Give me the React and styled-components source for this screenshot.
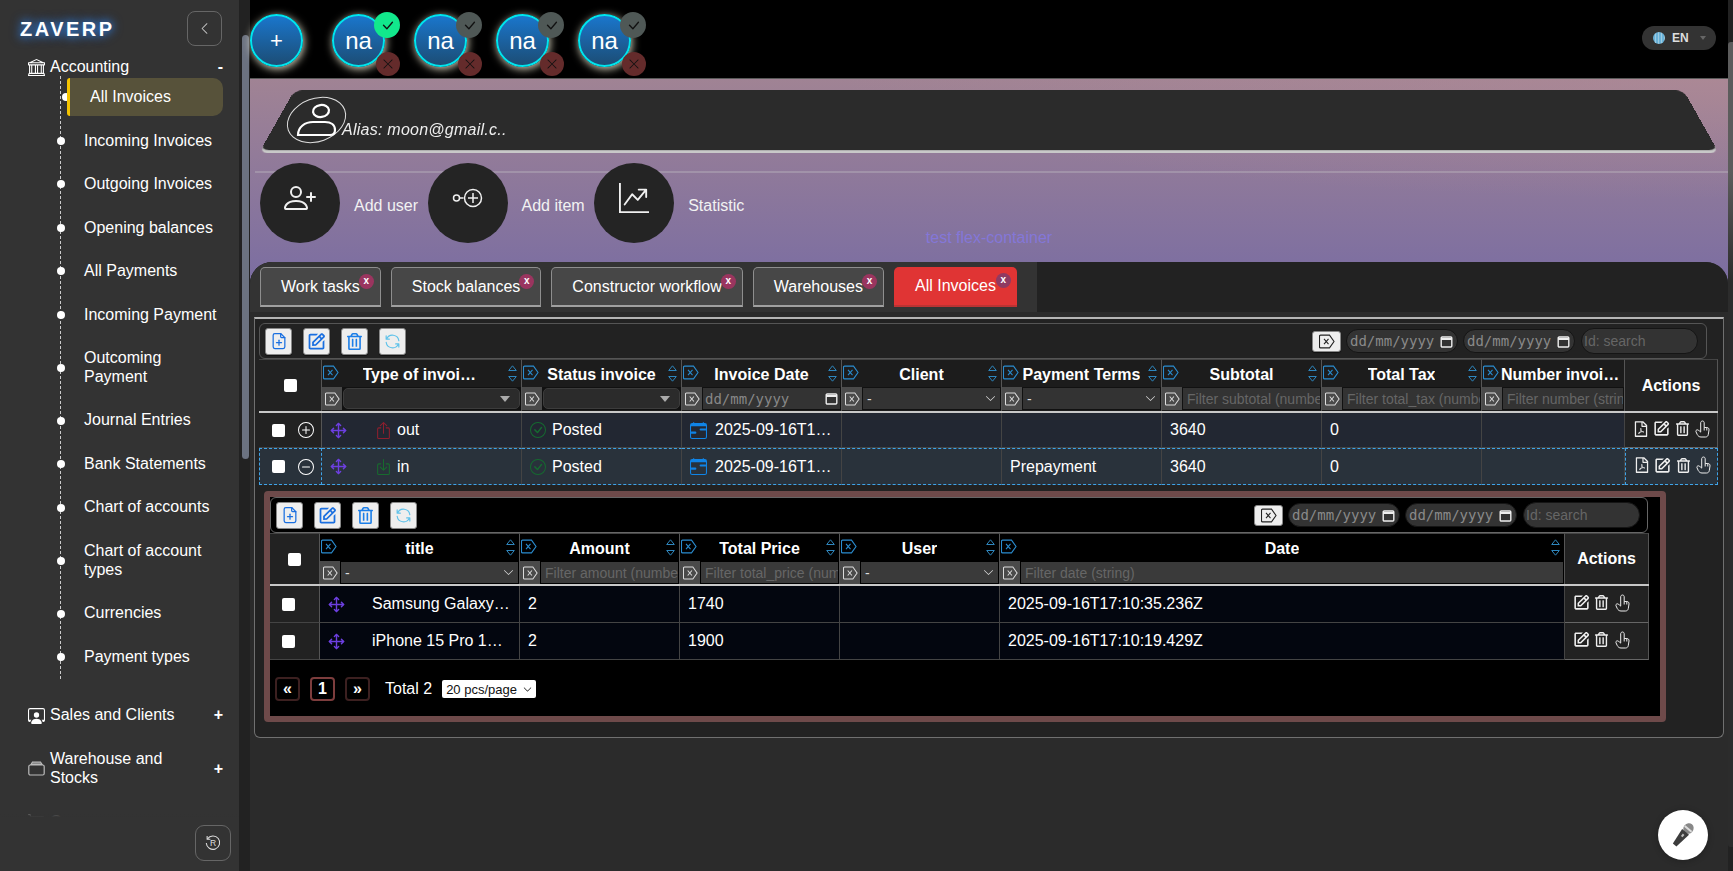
import React from "react";
import styled, { createGlobalStyle } from "styled-components";
import { BsBank, BsPersonWorkspace, BsBoxArrowUp, BsBoxArrowInDown, BsCheckCircle, BsCalendarRange, BsPlusCircle, BsDashCircle, BsCheckLg, BsXLg, BsChevronLeft, BsChevronDown, BsPersonPlus, BsGraphUpArrow, BsCart } from "react-icons/bs";
import { AiOutlineFilePdf } from "react-icons/ai";
import { BiEdit } from "react-icons/bi";
import { FaRegTrashAlt } from "react-icons/fa";
import { TbFilePlus, TbRefresh } from "react-icons/tb";
import { LuMove } from "react-icons/lu";

const Global = createGlobalStyle`
  html, body { margin: 0; height: 100%; overflow: hidden; background: #222; }
  body { font-family: "Liberation Sans", Arial, sans-serif; color: #fff; font-size: 16px; }
  * { box-sizing: border-box; }
`;

const Shell = styled.div`display: flex; height: 871px; width: 1733px; position: relative;`;

/* sidebar */
const Sidebar = styled.aside`width: 239px; flex: none; background: #333; display: flex; flex-direction: column; height: 100%;`;
const Nav = styled.nav`flex: 1; overflow: hidden; position: relative; min-height: 0;
  &::after { content: ""; position: absolute; left: 0; right: 0; bottom: 0; height: 14px; background: linear-gradient(transparent, #333); }
`;
const LogoRow = styled.div`height: 55px; display: flex; align-items: flex-start; justify-content: space-between; padding: 11px 17px 0 20px;`;
const Logo = styled.div`font-weight: 700; font-size: 20px; letter-spacing: 2.5px; line-height: 36px; text-shadow: 0 0 8px #2f7fe0, 0 0 12px #2f6fc0;`;
const Collapse = styled.button`width: 35px; height: 35px; border: 1px solid #666; border-radius: 8px; background: transparent; color: #ccc; display: flex; align-items: center; justify-content: center; padding: 0; font-size: 13px;`;
const GroupHead = styled.div`display: grid; grid-template-columns: 22px 1fr 16px; align-items: center; padding: ${p => p.$tight ? "3px" : "12.5px"} 16px ${p => p.$tight ? "0" : "12.5px"} 28px; line-height: 18.7px; font-size: 16px;
  & > svg { width: 17px; height: 17px; }
`;
const Sign = styled.span`font-weight: 700; text-align: right; font-size: 16px;`;
const SubList = styled.ul`list-style: none; margin: -1px 0 15px 60px; padding: 0; border-left: 1px dashed #ccc;`;
const SubItem = styled.li`position: relative; padding: 0; height: ${p => p.$two ? "62.4px" : "43.5px"}; display: flex; align-items: center; 
  &::before { content: ""; position: absolute; left: ${p => p.$active ? "1px" : "-4.5px"}; top: 50%; margin-top: -4px; width: 8px; height: 8px; border-radius: 50%; background: #fff; }
`;
const SubLink = styled.span`display: block; line-height: 18.7px; position: relative; margin-left: ${p => p.$active ? "6px" : "23px"}; width: ${p => p.$active ? "156px" : "136px"}; 
  ${p => p.$active && `height: 38px; padding: 9.5px 0 0 20px; background: #57523a; border-left: 3px solid #f5c400; border-radius: 3px 10px 10px 3px;`}
`;
const Footer = styled.div`height: 54px; flex: none; display: flex; justify-content: flex-end; align-items: center; padding: 0 8px 2px 0; background: #333; box-shadow: 0 -1px 2px rgba(0,0,0,.12);`;
const FootBtn = styled.button`width: 36px; height: 36px; border: 1px solid #666; border-radius: 9px; background: transparent; color: #ddd; padding: 0; display: flex; align-items: center; justify-content: center;`;

const Gutter = styled.div`width: 11px; flex: none; background: #222; padding: 35px 1px 0 3px;`;
const GutterThumb = styled.div`height: 424px; background: #6b7280; border-radius: 4px;`;

/* main */
const Main = styled.main`flex: 1; min-width: 0; display: flex; flex-direction: column; height: 100%;`;
const TopBar = styled.header`height: 79px; flex: none; background: #000; border-bottom: 1px solid #5a5a5a; display: flex; align-items: flex-start; padding: 14px 12px 0 0;`;
const Bubbles = styled.div`display: flex; gap: 29px;`;
const Bubble = styled.div`position: relative; width: 53px; height: 53px; border-radius: 50%; border: 2px solid #00e5ee; background: linear-gradient(#1a76cc, #1c4d75); box-shadow: 1px 2px 8px rgba(255,250,225,.85); display: flex; align-items: center; justify-content: center; font-size: ${p => p.$small ? "22px" : "24px"};`;
const Badge = styled.span`position: absolute; width: ${p => p.$top ? "26px" : "24px"}; height: ${p => p.$top ? "26px" : "24px"}; border-radius: 50%; background: ${p => p.$bg}; color: ${p => p.$fg || "#111"}; display: flex; align-items: center; justify-content: center; font-size: 13px; left: ${p => p.$top ? "40px" : "42px"}; top: ${p => p.$top ? "-4px" : "36px"};`;
const Lang = styled.div`margin: 12px 0 0 auto; width: 74px; height: 24px; border-radius: 12px; background: #333; display: flex; align-items: center; gap: 7px; padding-left: 11px; font-size: 12px; font-weight: 700; color: #ddd;`;
const Globe = styled.span`width: 12px; height: 12px; border-radius: 50%; background: repeating-linear-gradient(90deg, #6ab2d8 0 2px, #9ccbe2 2px 3px);`;
const Caret = styled.span`margin-left: 4px; width: 0; height: 0; border: 3.5px solid transparent; border-top: 4px solid #666; border-bottom: 0;`;

const Stage = styled.div`flex: 1; min-height: 0; background: radial-gradient(60% 120px at 100% 0, rgba(180,140,150,.55), transparent), linear-gradient(#a08394, #7a6da2) 0 0 / 100% 209px no-repeat, #2b2b2b; background-repeat: no-repeat; background-size: 100% 209px, 100% 209px; background-color: #2b2b2b; display: flex; flex-direction: column;`;
const Hero = styled.section`height: 183px; flex: none; padding-top: 12px;`;
const ProfileCard = styled.div`position: relative; height: 62px; margin: 0 9px; display: flex; align-items: flex-start; padding: 6px 0 0 27px;
  &::before { content: ""; position: absolute; left: 0; right: 0; bottom: 0; height: 67px; background: #2b2b2b; border-bottom: 3px solid #c8c8c8; border-radius: 8px; transform-origin: 50% 100%; transform: perspective(470px) rotateX(20deg); }
`;
const AvatarRing = styled.div`position: relative; width: 61px; height: 44px; margin-top: 1px; display: flex; align-items: center; justify-content: center;
  &::before { content: ""; position: absolute; inset: 0; border: 1px solid #ddd; border-radius: 50%; transform: rotate(-20deg); }
`;
const AliasText = styled.span`position: relative; margin: 24px 0 0 -5px; font-style: italic; font-size: 16px; letter-spacing: .25px; color: #eee;`;
const ActionRow = styled.div`margin: 18px 0 0 5px; border-top: 2px solid rgba(205,205,205,.3); display: flex; align-items: flex-start; padding-left: 5px; height: 72px;`;
const ActionGroup = styled.div`display: flex; align-items: center; margin-top: -10px;`;
const ActionCircle = styled.div`width: 80px; height: 80px; border-radius: 50%; background: #242424; display: flex; align-items: center; justify-content: center; color: #f0f0f0; padding-bottom: 10px;`;
const ActionLabel = styled.span`margin: 6px 9.5px 0 14px; color: #f2f2f2; font-size: 16px;`;
const FlexNote = styled.div`text-align: center; color: #8477d8; font-size: 16px; margin-top: -14px; line-height: 18px;`;

const Panel = styled.section`flex: 1; min-height: 0; margin-top: 0; background: #2b2b2b; border-radius: 22px 22px 0 0; overflow: hidden;`;
const PanelTop = styled.div`height: 50px; background: #222;`;
const TabStrip = styled.div`width: 787px; height: 50px; background: #333; display: flex; gap: 10px; padding: 5px 0 0 10px;`;
const Tab = styled.div`position: relative; height: 40px; padding: 0 ${p => p.$active ? "21px" : "20px"}; display: flex; align-items: center; border-radius: 5px 5px 0 0; font-size: 16px;
  background: ${p => p.$active ? "#e03434" : "#474747"};
  border: ${p => p.$active ? "0" : "1px solid #8e8e8e"}; border-bottom: 2px solid ${p => p.$active ? "#b33" : "#a0a0a0"};
`;
const TabClose = styled.span`position: absolute; top: 6px; right: 6px; width: 15px; height: 15px; border-radius: 50%; background: ${p => p.$active ? "#8f3a62" : "#9a355f"}; color: #fff; font-size: 10px; font-weight: 700; display: flex; align-items: center; justify-content: center; padding-bottom: 2px;`;

const TableBox = styled.div`height: 421px; margin: 5px 4px 0 4px; background: #222; border: 1px solid #707070; border-top: 2px solid #b5b5b5; border-radius: 0 0 6px 6px; padding: 4px 0 0 4px;`;
const Toolbar = styled.div`height: 36px; width: ${p => p.$nested ? "1378px" : "1448px"}; border: 1px solid ${p => p.$nested ? "#666" : "#555"}; border-radius: 6px; display: flex; align-items: center; gap: 11px; padding-left: 5px; background: ${p => p.$nested ? "#000" : "transparent"};`;
const ToolBtn = styled.button`width: 27px; height: 27px; flex: none; border: 1px solid #888; border-radius: 3px; background: #eeeeee; color: ${p => p.$c || "#1a6fe0"}; display: flex; align-items: center; justify-content: center; padding: 0; box-shadow: 0 1px 1px rgba(0,0,0,.5);`;
const ToolRight = styled.div`margin-left: auto; display: flex; align-items: center; gap: 5px; padding-right: ${p => p.$nested ? "7px" : "8px"};`;
const ClearBtn = styled(ToolBtn)`width: 29px; height: 21px; color: #222; margin-right: 0;`;
const DatePill = styled.div`width: 112px; height: 24px; border-radius: 12px; background: #333; border: 1px solid #151515; display: flex; align-items: center; justify-content: space-between; padding: 0 4px 0 3px; font: 14px "DejaVu Sans Mono", "Liberation Mono", monospace; color: #8a8a8a; letter-spacing: 0;`;
const SearchPill = styled.div`width: 117px; height: 26px; margin-left: 1px; border-radius: 13px; background: #333; border: 1px solid #151515; display: flex; align-items: center; padding-left: 2px; font-size: 14px; color: #666;`;

const Grid = styled.div`display: grid; grid-template-columns: ${p => p.$cols}; width: ${p => p.$w}px;`;
const HeadSide = styled.div`background: #222; display: flex; align-items: center; justify-content: center; height: ${p => p.$h}px; border-top: 1px solid #444; border-right: 1px solid #555; font-weight: 700;`;
const HeadCol = styled.div`background: ${p => p.$nested ? "#000" : "#1c1c1c"}; height: ${p => p.$h}px; display: flex; flex-direction: column; border-right: 1px solid #555; border-top: 1px solid #444; min-width: 0;`;
const HeadTop = styled.div`height: 27px; display: grid; grid-template-columns: ${p => p.$noSort ? "18px 1fr" : "18px 1fr 18px"}; align-items: center; flex: none;`;
const TagIcon = styled.span`color: ${p => p.$c || "#2a8ccf"}; display: flex; padding-left: 1px; margin-top: -3px;`;
const HeadTitle = styled.span`display: block; font-weight: 700; font-size: 16px; line-height: 20px; max-width: ${p => p.$wide ? "none" : p.$noSort ? "121px" : "118px"}; margin: ${p => p.$noSort ? "2px 0 0 1px" : "2px auto 0"}; white-space: nowrap; overflow: hidden; text-overflow: ellipsis;`;
const SortWrap = styled.span`display: flex; flex-direction: column; align-items: center; gap: 5px; color: #2e86bd;`;
const FilterRow = styled.div`height: 23px; display: grid; grid-template-columns: 20px 1fr; flex: none; background: ${p => p.$nested ? "#000" : "#111"};`;
const FilterTag = styled.div`background: #4a4a4a; color: #ddd; display: flex; align-items: center; justify-content: center; height: 23px;`;
const FilterField = styled.div`margin: 1px; background: ${p => p.$nested ? "#3a3a3a" : p.$round ? "#2b2b2b" : "#333"}; border: ${p => p.$round ? "1px solid #3c3c3c" : "0"}; border-radius: ${p => p.$round ? "5px" : "0"}; display: flex; align-items: center; justify-content: space-between; font-size: 14px; color: #666; padding: 0 4px; overflow: hidden; white-space: nowrap; min-width: 0; ${p => p.$mono && `font-family: "DejaVu Sans Mono", monospace; color: #888; padding: 0 2px;`} ${p => p.$dark && `color: #ddd;`}`;
const FilledArrow = styled.span`width: 0; height: 0; border: 5px solid transparent; border-top: 6px solid #aaa; border-bottom: 0; margin-right: 5px;`;
const HeadLine = styled.div`grid-column: 1 / -1; height: 2px; background: #c8c8c8;`;

const SideCell = styled.div`background: #222; height: ${p => p.$h}px; display: flex; align-items: center; gap: 13px; padding-left: ${p => p.$pl}px; border-right: ${p => p.$sel ? "1px dashed #3fa4e8" : "1px solid #555"}; border-bottom: 1px solid #444;
  ${p => p.$sel && `background: #29323b; border-top: 1px dashed #3fa4e8; border-bottom: 1px dashed #3fa4e8; border-left: 1px dashed #3fa4e8;`}
`;
const DataCell = styled.div`height: ${p => p.$h}px; min-width: 0; background: ${p => p.$nested ? "#03060f" : p.$sel ? "#29323b" : "#222732"}; border-right: 1px solid #444; border-bottom: 1px solid #444; display: flex; align-items: center; padding-left: 8px; font-size: 16px;
  ${p => p.$sel && `border-top: 1px dashed #3fa4e8; border-bottom: 1px dashed #3fa4e8;`}
`;
const ActCell = styled.div`height: ${p => p.$h}px; background: ${p => p.$sel ? "#29323b" : "#222"}; display: flex; align-items: center; padding-left: 6px; color: #eee; padding-bottom: 3px; border-bottom: 1px solid #666;
  border-right: ${p => p.$sel ? "1px dashed #3fa4e8" : "1px solid #555"};
  ${p => p.$sel && `border-top: 1px dashed #3fa4e8; border-bottom: 1px dashed #3fa4e8; border-left: 1px dashed #3fa4e8;`}
`;
const ActBox = styled.span`width: 20.5px; flex: none; display: flex; justify-content: center;`;
const Check = styled.span`display: block; width: ${p => p.$s || 13}px; height: ${p => p.$s || 13}px; background: #fff; border-radius: 2px; flex: none;`;
const DragIcon = styled.span`color: #6d3fe0; display: flex; flex: none;`;
const TypeIcon = styled.span`color: ${p => p.$c}; display: flex; margin: 0 5px 0 28px;`;
const StatusIcon = styled.span`color: ${p => p.$c}; display: flex; margin-right: 6px;`;
const Ell = styled.span`display: block; max-width: ${p => p.$w}px; white-space: nowrap; overflow: hidden; text-overflow: ellipsis; margin-left: ${p => p.$ml || 0}px;`;

const Nested = styled.div`margin: 6px 0 0 5px; width: 1402px; height: 231px; border: 6px solid #6e4a4a; border-radius: 4px; background: #000;`;
const Pager = styled.div`display: flex; align-items: center; margin-top: 17px; padding-left: 5px;`;
const PageBtn = styled.span`width: 25px; height: 24px; border: 2px solid ${p => p.$on ? "#7d3d3d" : "#3c2020"}; border-radius: 4px; margin-right: 10px; display: flex; align-items: center; justify-content: center; font-weight: 700; font-size: 16px;`;
const TotalText = styled.span`margin: 0 10px 0 5px;`;
const PageSelect = styled.span`width: 94px; height: 18px; background: #fff; color: #111; border-radius: 2px; font-size: 13px; display: flex; align-items: center; justify-content: space-between; padding: 0 4px;`;

const RailWrap = styled.div`width: 5px; flex: none; background: #222; padding-top: 42px;`;
const RailThumb = styled.div`height: 805px; border-radius: 3px 0 0 3px; background: linear-gradient(#5c5c5c 0, #5c5c5c 130px, #2c2c2c 240px);`;
const Mic = styled.button`position: absolute; left: 1658px; top: 810px; width: 50px; height: 50px; border-radius: 50%; background: #fff; border: 0; padding: 0; display: flex; align-items: center; justify-content: center; box-shadow: 0 1px 6px rgba(0,0,0,.25);`;

const Tag = ({ w = 16, h = 15 }) => (
  <svg width={w} height={h} viewBox="0 0 16 14" fill="none" stroke="currentColor" strokeWidth="1.1" preserveAspectRatio="none">
    <path d="M1.5 1h9l4.5 6-4.5 6h-9a1 1 0 0 1-1-1V2a1 1 0 0 1 1-1z" />
    <path d="M5 4.5l4.5 5M9.5 4.5l-4.5 5" />
  </svg>
);
const Sort = () => (
  <SortWrap>
    <svg width="9" height="6" viewBox="0 0 9 6" fill="none" stroke="currentColor"><path d="M.7 5.5L4.5.8l3.8 4.7z" /></svg>
    <svg width="9" height="6" viewBox="0 0 9 6" fill="none" stroke="currentColor"><path d="M.7.5l3.8 4.7L8.3.5z" /></svg>
  </SortWrap>
);
const Cal = () => (
  <svg width="13" height="13" viewBox="0 0 13 13" fill="none" stroke="#eee" strokeWidth="1.4"><rect x="1.2" y="2" width="10.6" height="10" rx="1" /><path d="M1 4h11" strokeWidth="2" /></svg>
);
const HandUp = () => (
  <svg width="15" height="18" viewBox="0 0 15 18" fill="none" stroke="currentColor" strokeWidth="1">
    <path d="M7.5 1C8.5 1 9.2 1.8 9.2 2.8V7.5h2.6c1.4 0 2.4 1 2.2 2.4l-.7 4.6c-.2 1.4-1.2 2.5-2.8 2.5H6c-1.8 0-3-1-3.8-2.6L1 11.8c-.4-1 .3-2 1.3-2 .9 0 1.6.5 2.1 1.3l1.3 1V2.8C5.7 1.8 6.5 1 7.5 1z" />
    <path d="M9.2 7.5v3M11.8 7.5v3" />
  </svg>
);

const subs = [
  ["All Invoices", 0, 1], ["Incoming Invoices"], ["Outgoing Invoices"], ["Opening balances"], ["All Payments"], ["Incoming Payment"],
  ["Outcoming Payment", 1], ["Journal Entries"], ["Bank Statements"], ["Chart of accounts"], ["Chart of account types", 1], ["Currencies"], ["Payment types"],
];
const WarehouseIcon = () => (
  <svg width="17" height="16" viewBox="0 0 17 16" fill="none" stroke="#bbb" strokeWidth="1.2"><path d="M3 4l1.5-2.5h8L14 4z" fill="#888" /><rect x=".8" y="4.5" width="15.4" height="10" rx="1.5" /></svg>
);

const outerCols = [
  { t: "Type of invoices", w: 200, f: "select" },
  { t: "Status invoice", w: 160, f: "select" },
  { t: "Invoice Date", w: 160, f: "date" },
  { t: "Client", w: 160, f: "dash" },
  { t: "Payment Terms", w: 160, f: "dash" },
  { t: "Subtotal", w: 160, f: "Filter subtotal (number)" },
  { t: "Total Tax", w: 160, f: "Filter total_tax (number)" },
  { t: "Number invoices", w: 143, f: "Filter number (string)", noSort: true },
];
const innerCols = [
  { t: "title", w: 200, f: "dash" },
  { t: "Amount", w: 160, f: "Filter amount (number)" },
  { t: "Total Price", w: 160, f: "Filter total_price (number)" },
  { t: "User", w: 160, f: "dash" },
  { t: "Date", w: 565, f: "Filter date (string)", wide: true },
];

const Filter = ({ f, nested }) => (
  <FilterRow $nested={nested}>
    <FilterTag><Tag w={15} h={14} /></FilterTag>
    {f === "select" && <FilterField $round><span /><FilledArrow /></FilterField>}
    {f === "date" && <FilterField $mono>dd/mm/yyyy<Cal /></FilterField>}
    {f === "dash" && <FilterField $nested={nested} $dark><span>-</span><BsChevronDown size={11} color="#ddd" /></FilterField>}
    {!["select", "date", "dash"].includes(f) && <FilterField $nested={nested}>{f}</FilterField>}
  </FilterRow>
);
const Head = ({ c, nested, h }) => (
  <HeadCol $nested={nested} $h={h}>
    <HeadTop $noSort={c.noSort}>
      <TagIcon><Tag /></TagIcon>
      <HeadTitle $wide={c.wide} $noSort={c.noSort}>{c.t}</HeadTitle>
      {!c.noSort && <Sort />}
    </HeadTop>
    <Filter f={c.f} nested={nested} />
  </HeadCol>
);
const ToolBtns = () => (
  <>
    <ToolBtn><TbFilePlus size={20} strokeWidth={1.5} /></ToolBtn>
    <ToolBtn><BiEdit size={21} /></ToolBtn>
    <ToolBtn $c="#1b7ee8"><FaRegTrashAlt size={17} /></ToolBtn>
    <ToolBtn $c="#5fc2ea"><TbRefresh size={19} strokeWidth={1.5} /></ToolBtn>
  </>
);
const ToolFilters = ({ nested }) => (
  <ToolRight $nested={nested}>
    <ClearBtn><Tag /></ClearBtn>
    <DatePill>dd/mm/yyyy<Cal /></DatePill>
    <DatePill>dd/mm/yyyy<Cal /></DatePill>
    <SearchPill>Id: search</SearchPill>
  </ToolRight>
);
const Acts = ({ pdf }) => (
  <>
    {pdf && <ActBox><AiOutlineFilePdf size={18} /></ActBox>}
    <ActBox><BiEdit size={19} /></ActBox>
    <ActBox><FaRegTrashAlt size={15} /></ActBox>
    <ActBox><HandUp /></ActBox>
  </>
);

const outerRows = [
  { sel: false, kind: "out", toggle: <BsPlusCircle size={16} />, icon: <BsBoxArrowUp size={17} />, c: "#8e1f2e", terms: "" },
  { sel: true, kind: "in", toggle: <BsDashCircle size={16} />, icon: <BsBoxArrowInDown size={17} />, c: "#176b2e", terms: "Prepayment" },
];
const outerGrid = "63px 200px 160px 160px 160px 160px 160px 160px 143px 93px";
const innerGrid = "50px 200px 160px 160px 160px 565px 84px";
const items = [
  { t: "Samsung Galaxy S24 Ultra", p: "1740", d: "2025-09-16T17:10:35.236Z" },
  { t: "iPhone 15 Pro 128GB Max", p: "1900", d: "2025-09-16T17:10:19.429Z" },
];

export default function App() {
  return (
    <>
      <Global />
      <Shell>
        <Sidebar>
          <Nav>
            <LogoRow>
              <Logo>ZAVERP</Logo>
              <Collapse><BsChevronLeft /></Collapse>
            </LogoRow>
            <GroupHead $tight><BsBank /><span>Accounting</span><Sign>-</Sign></GroupHead>
            <SubList>
              {subs.map(([t, two, active]) => (
                <SubItem key={t} $two={two} $active={active}>
                  <SubLink $active={active}>{t}</SubLink>
                </SubItem>
              ))}
            </SubList>
            <GroupHead><BsPersonWorkspace /><span>Sales and Clients</span><Sign>+</Sign></GroupHead>
            <GroupHead><WarehouseIcon /><span>Warehouse and Stocks</span><Sign>+</Sign></GroupHead>
            <GroupHead><BsCart /><span>Commerce</span><Sign>+</Sign></GroupHead>
          </Nav>
          <Footer>
            <FootBtn>
              <svg width="16" height="16" viewBox="0 0 15 15" fill="none" stroke="currentColor"><path d="M2.3 3.6A6.3 6.3 0 1 1 1.2 7.5" /><path d="M2 1v3h3" /><text x="7.5" y="10.5" textAnchor="middle" fontSize="8" fill="currentColor" stroke="none" fontFamily="Liberation Sans">R</text></svg>
            </FootBtn>
          </Footer>
        </Sidebar>
        <Gutter><GutterThumb /></Gutter>
        <Main>
          <TopBar>
            <Bubbles>
              <Bubble $small>+</Bubble>
              {[0, 1, 2, 3].map(i => (
                <Bubble key={i}>na
                  <Badge $top $bg={i === 0 ? "#12e88c" : "#4f5856"}><BsCheckLg size={15} /></Badge>
                  <Badge $bg="#642b2b"><BsXLg size={12} /></Badge>
                </Bubble>
              ))}
            </Bubbles>
            <Lang><Globe />EN<Caret /></Lang>
          </TopBar>
          <Stage>
            <Hero>
              <ProfileCard>
                <AvatarRing>
                  <svg width="46" height="34" viewBox="0 0 46 34" fill="none" stroke="#fff" strokeWidth="2.2" style={{ position: "relative" }}>
                    <ellipse cx="27" cy="8" rx="8" ry="6" transform="rotate(-8 27 8)" />
                    <path d="M4 32c0-8 7-13 15-13h12c6 0 10 3 10 8 0 3-2 5-5 5z" />
                  </svg>
                </AvatarRing>
                <AliasText>Alias: moon@gmail.c..</AliasText>
              </ProfileCard>
              <ActionRow>
                <ActionGroup><ActionCircle><BsPersonPlus size={32} /></ActionCircle><ActionLabel>Add user</ActionLabel></ActionGroup>
                <ActionGroup>
                  <ActionCircle>
                    <svg width="32" height="22" viewBox="0 0 32 22" fill="none" stroke="currentColor" strokeWidth="1.5"><circle cx="4.5" cy="11" r="3" /><path d="M7.5 11h4" /><circle cx="21" cy="11" r="8.5" /><path d="M21 6v10M16 11h10" /></svg>
                  </ActionCircle>
                  <ActionLabel>Add item</ActionLabel>
                </ActionGroup>
                <ActionGroup><ActionCircle><BsGraphUpArrow size={30} /></ActionCircle><ActionLabel>Statistic</ActionLabel></ActionGroup>
              </ActionRow>
              <FlexNote>test flex-container</FlexNote>
            </Hero>
            <Panel>
              <PanelTop>
                <TabStrip>
                  {["Work tasks", "Stock balances", "Constructor workflow", "Warehouses"].map(t => (
                    <Tab key={t}>{t}<TabClose>x</TabClose></Tab>
                  ))}
                  <Tab $active>All Invoices<TabClose $active>x</TabClose></Tab>
                </TabStrip>
              </PanelTop>
              <TableBox>
                <Toolbar><ToolBtns /><ToolFilters /></Toolbar>
                <Grid $cols={outerGrid} $w={1459}>
                  <HeadSide $h={52}><Check $s={13} /></HeadSide>
                  {outerCols.map(c => <Head key={c.t} c={c} h={52} />)}
                  <HeadSide $h={52}>Actions</HeadSide>
                  <HeadLine />
                  {outerRows.map(r => (
                    <React.Fragment key={r.kind}>
                      <SideCell $h={r.sel ? 37 : 35} $pl={r.sel ? 12 : 13} $sel={r.sel}><Check />{r.toggle}</SideCell>
                      <DataCell $h={r.sel ? 37 : 35} $sel={r.sel}>
                        <DragIcon><LuMove size={17} /></DragIcon>
                        <TypeIcon $c={r.c}>{r.icon}</TypeIcon>{r.kind}
                      </DataCell>
                      <DataCell $h={r.sel ? 37 : 35} $sel={r.sel}><StatusIcon $c="#156a30"><BsCheckCircle size={16} /></StatusIcon>Posted</DataCell>
                      <DataCell $h={r.sel ? 37 : 35} $sel={r.sel}><StatusIcon $c="#1084e6"><BsCalendarRange size={17} /></StatusIcon><Ell $w={118} $ml={2}>2025-09-16T17:10:35.236Z</Ell></DataCell>
                      <DataCell $h={r.sel ? 37 : 35} $sel={r.sel} />
                      <DataCell $h={r.sel ? 37 : 35} $sel={r.sel}>{r.terms}</DataCell>
                      <DataCell $h={r.sel ? 37 : 35} $sel={r.sel}>3640</DataCell>
                      <DataCell $h={r.sel ? 37 : 35} $sel={r.sel}>0</DataCell>
                      <DataCell $h={r.sel ? 37 : 35} $sel={r.sel} />
                      <ActCell $h={r.sel ? 37 : 35} $sel={r.sel}><Acts pdf /></ActCell>
                    </React.Fragment>
                  ))}
                </Grid>
                <Nested>
                  <Toolbar $nested><ToolBtns /><ToolFilters nested /></Toolbar>
                  <Grid $cols={innerGrid} $w={1379}>
                    <HeadSide $h={51}><Check $s={13} /></HeadSide>
                    {innerCols.map(c => <Head key={c.t} c={c} nested h={51} />)}
                    <HeadSide $h={51}>Actions</HeadSide>
                    <HeadLine />
                    {items.map(it => (
                      <React.Fragment key={it.t}>
                        <SideCell $h={37} $pl={12}><Check /></SideCell>
                        <DataCell $h={37} $nested><DragIcon><LuMove size={17} /></DragIcon><Ell $w={139} $ml={27}>{it.t}</Ell></DataCell>
                        <DataCell $h={37} $nested>2</DataCell>
                        <DataCell $h={37} $nested>{it.p}</DataCell>
                        <DataCell $h={37} $nested />
                        <DataCell $h={37} $nested>{it.d}</DataCell>
                        <ActCell $h={37}><Acts /></ActCell>
                      </React.Fragment>
                    ))}
                  </Grid>
                  <Pager>
                    <PageBtn>«</PageBtn><PageBtn $on>1</PageBtn><PageBtn>»</PageBtn>
                    <TotalText>Total 2</TotalText>
                    <PageSelect>20 pcs/page<BsChevronDown size={9} /></PageSelect>
                  </Pager>
                </Nested>
              </TableBox>
            </Panel>
          </Stage>
        </Main>
        <RailWrap><RailThumb /></RailWrap>
        <Mic aria-label="Voice input">
          <svg width="30" height="30" viewBox="0 0 30 30"><g transform="rotate(40 15 15)"><ellipse cx="15" cy="6.5" rx="5" ry="5.5" fill="#888" /><rect x="10.5" y="6" width="9" height="2" fill="#ddd" /><path d="M10.5 11h9l-2.2 17h-4.6z" fill="#3c3c3c" /><rect x="14" y="14" width="2" height="3" fill="#bbb" /></g></svg>
        </Mic>
      </Shell>
    </>
  );
}
